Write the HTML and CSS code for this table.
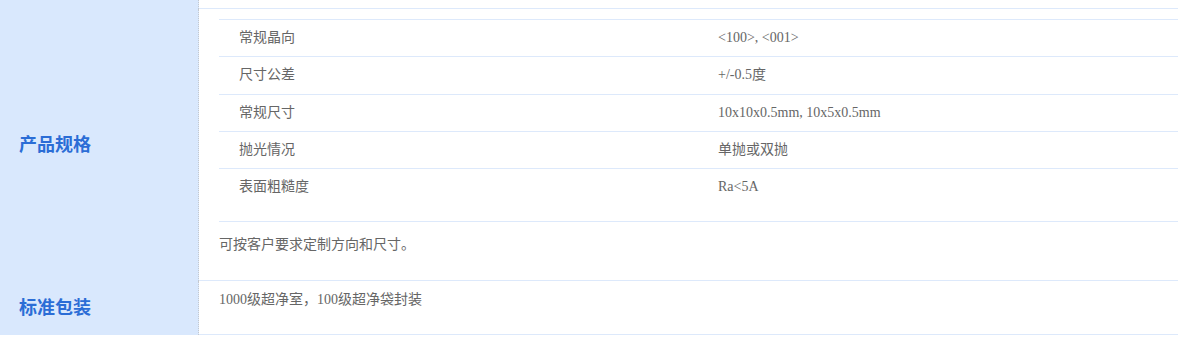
FILE: index.html
```html
<!DOCTYPE html>
<html lang="zh-CN">
<head>
<meta charset="utf-8">
<title>产品规格</title>
<link rel="stylesheet" href="styles.css">
</head>
<body>
<div class="spec">
  <div class="th"></div>
  <div class="td stub"></div>

  <div class="th"><span class="label">产品规格</span></div>
  <div class="td main">
    <div class="inner">
      <div class="irow"><div class="k">常规晶向</div><div class="v">&lt;100&gt;, &lt;001&gt;</div></div>
      <div class="irow"><div class="k">尺寸公差</div><div class="v">+/-0.5度</div></div>
      <div class="irow"><div class="k">常规尺寸</div><div class="v">10x10x0.5mm, 10x5x0.5mm</div></div>
      <div class="irow"><div class="k">抛光情况</div><div class="v">单抛或双抛</div></div>
      <div class="irow last"><div class="k">表面粗糙度</div><div class="v">Ra&lt;5A</div></div>
    </div>
    <div class="note">可按客户要求定制方向和尺寸。</div>
  </div>

  <div class="th"><span class="label">标准包装</span></div>
  <div class="td pack">1000级超净室，100级超净袋封装</div>
</div>
</body>
</html>
```

FILE: styles.css
```css
html, body {
  margin: 0;
  padding: 0;
  background: #ffffff;
}

body {
  font-family: "Liberation Serif", "Noto Sans CJK SC", serif;
  font-size: 14px;
  color: #666666;
}

.spec {
  display: grid;
  grid-template-columns: 199px 1fr;
  width: 1178px;
}

.th {
  background: #d9e8fd;
  border-right: 1px dotted #c4c8cf;
  display: flex;
  align-items: center;
  padding-left: 19px;
  padding-bottom: 3px;
}

.label {
  font-family: "Noto Sans CJK SC", sans-serif;
  font-weight: 700;
  font-size: 18px;
  line-height: 24px;
  color: #2b6dd6;
}

.td {
  border-bottom: 1px solid #dde9fb;
}

.stub {
  height: 8px;
}

.main {
  padding: 10px 0 0 20px;
}

.inner {
  border-top: 1px solid #dde9fb;
  margin-bottom: 15.5px;
}

.irow {
  display: flex;
  align-items: center;
  height: 36.3px;
  border-bottom: 1px solid #dde9fb;
  line-height: 20px;
}

.irow.last {
  border-bottom: none;
}

.k {
  width: 459px;
  padding-left: 20px;
}

.v {
  padding-left: 20px;
}

.note {
  border-top: 1px solid #dde9fb;
  padding: 13px 0 25px;
  line-height: 20px;
}

.pack {
  padding: 9px 0 24px 20px;
  line-height: 20px;
}
```
